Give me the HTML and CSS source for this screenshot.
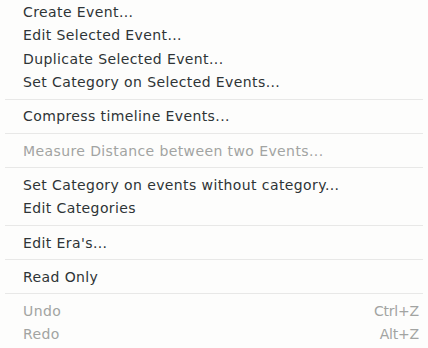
FILE: index.html
```html
<!DOCTYPE html>
<html>
<head>
<meta charset="utf-8">
<link rel="stylesheet" href="styles.css">
</head>
<body>
<div class="menu">
  <div class="item">Create Event...</div>
  <div class="item">Edit Selected Event...</div>
  <div class="item">Duplicate Selected Event...</div>
  <div class="item">Set Category on Selected Events...</div>
  <div class="sep"></div>
  <div class="item">Compress timeline Events...</div>
  <div class="sep"></div>
  <div class="item disabled">Measure Distance between two Events...</div>
  <div class="sep"></div>
  <div class="item">Set Category on events without category...</div>
  <div class="item">Edit Categories</div>
  <div class="sep"></div>
  <div class="item">Edit Era's...</div>
  <div class="sep"></div>
  <div class="item">Read Only</div>
  <div class="sep"></div>
  <div class="item disabled"><span>Undo</span><span class="accel">Ctrl+Z</span></div>
  <div class="item disabled"><span>Redo</span><span class="accel">Alt+Z</span></div>
</div>
</body>
</html>
```

FILE: styles.css
```css
html, body {
  margin: 0;
  padding: 0;
  background: #fdfdfc;
}
.menu {
  width: 428px;
  height: 348px;
  display: flex;
  flex-direction: column;
  padding-top: 0.5px;
  font-family: "DejaVu Sans", "Noto Sans", sans-serif;
  font-size: 14px;
  letter-spacing: 0.4px;
  color: #2e3436;
}
.item {
  height: 23.3px;
  display: flex;
  align-items: center;
  justify-content: space-between;
  padding: 0 9px 0 23px;
  white-space: nowrap;
}
.disabled {
  color: #a2a4a2;
}
.accel {
  letter-spacing: -0.2px;
}
.sep {
  height: 1px;
  margin: 5px 5px;
  background: #e8e8e7;
}
```
